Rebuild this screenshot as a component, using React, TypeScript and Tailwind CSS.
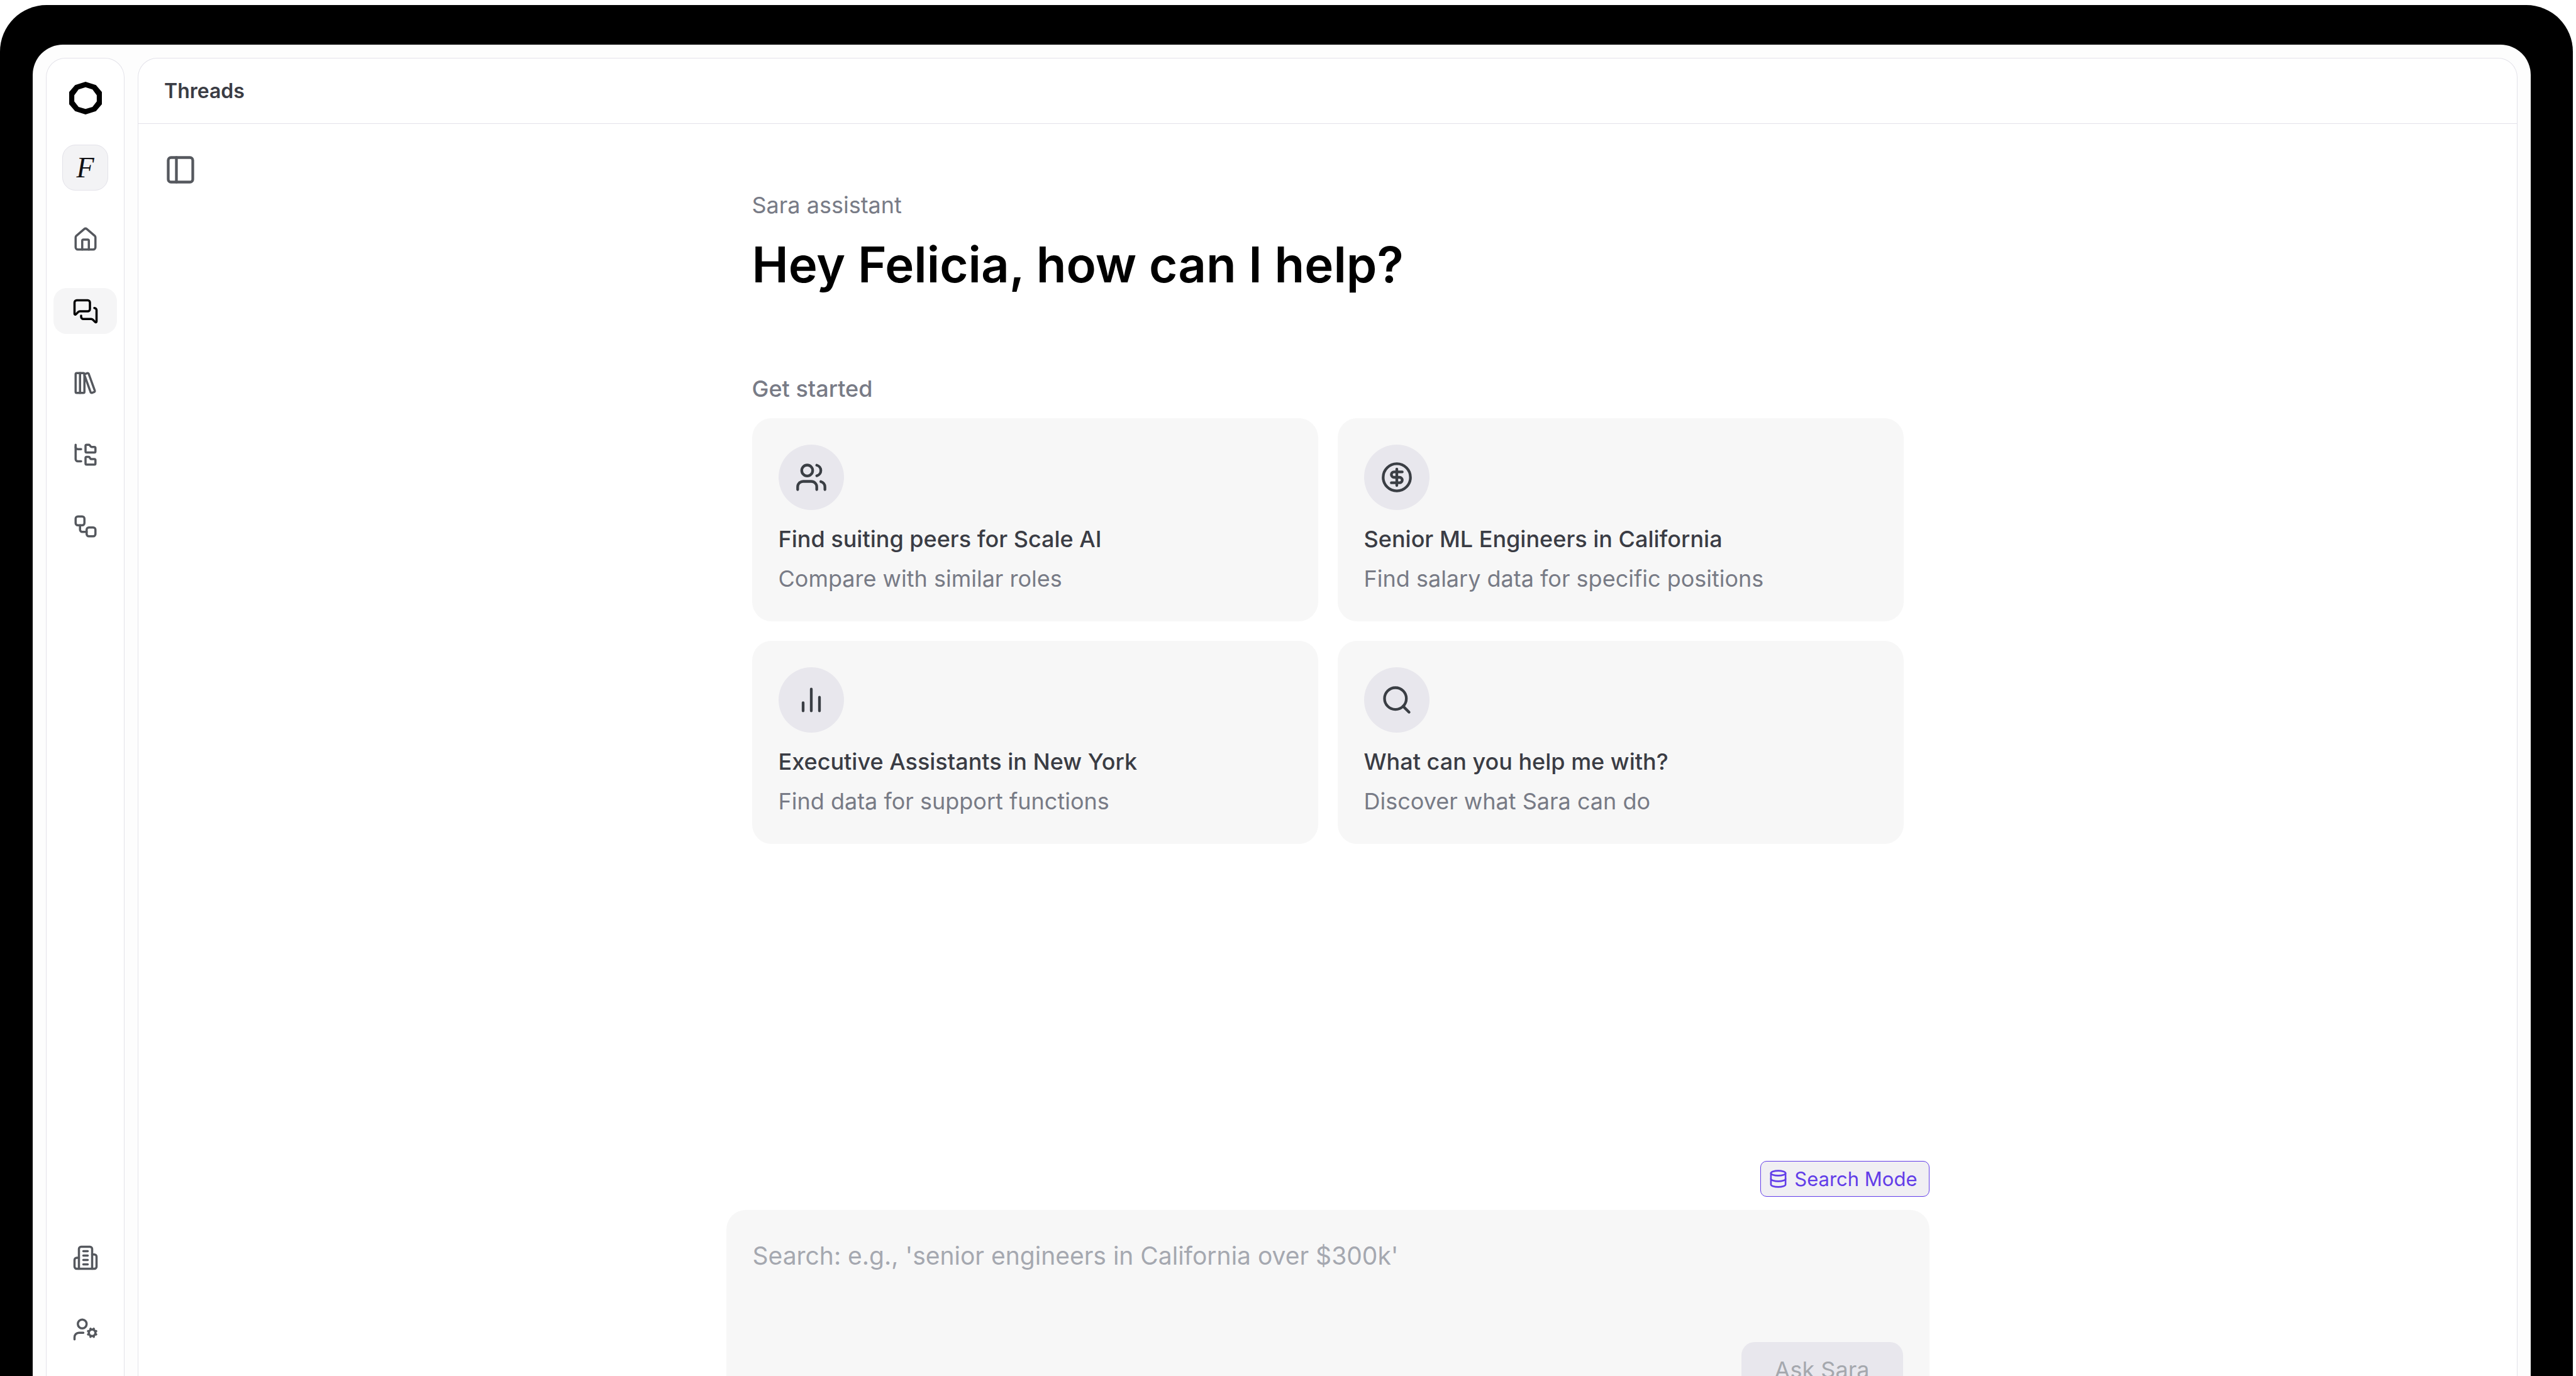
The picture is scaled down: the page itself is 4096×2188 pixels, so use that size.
import {
  CircleDollarSign,
  Database,
  FolderTree,
  House,
  LibraryBig,
  MessagesSquare,
  PanelLeft,
  Search,
  UserCog,
  Users,
  Workflow,
} from "lucide-react";
import type { ComponentType } from "react";

type IconType = ComponentType<{ className?: string }>;

function Logo({ className }: { className?: string }) {
  return (
    <svg viewBox="0 0 80 80" className={className} fill="currentColor" fillRule="evenodd" aria-hidden="true">
      <path d="M40 0 65.500 8 80 25V55L65.500 72 40 80 14.500 72 0 55V25L14.500 8ZM40 13.500 23 19 12.500 33V48L23 61.500 40 66.500 57 61.500 67.500 48V33L57 19Z" />
    </svg>
  );
}

function Building({ className }: { className?: string }) {
  return (
    <svg viewBox="0 0 24 24" className={className} fill="none" stroke="currentColor" strokeWidth="2" strokeLinecap="round" strokeLinejoin="round" aria-hidden="true">
      <path d="M6 22V4a2 2 0 0 1 2-2h8a2 2 0 0 1 2 2v18Z" />
      <path d="M6 12H4a2 2 0 0 0-2 2v6a2 2 0 0 0 2 2h2" />
      <path d="M18 9h2a2 2 0 0 1 2 2v9a2 2 0 0 1-2 2h-2" />
      <path d="M10 6h4M10 10h4M10 14h4M10 18h4" />
    </svg>
  );
}

function Bars({ className }: { className?: string }) {
  return (
    <svg viewBox="0 0 24 24" className={className} fill="none" stroke="currentColor" strokeWidth="2" strokeLinecap="round" aria-hidden="true">
      <path d="M6 20v-6M12 20V4M18 20V10" />
    </svg>
  );
}

const mainNav: { label: string; icon: IconType; active?: boolean }[] = [
  { label: "Home", icon: House },
  { label: "Threads", icon: MessagesSquare, active: true },
  { label: "Library", icon: LibraryBig },
  { label: "Job architecture", icon: FolderTree },
  { label: "Workflows", icon: Workflow },
];

const footerNav: { label: string; icon: IconType; active?: boolean }[] = [
  { label: "Company", icon: Building },
  { label: "Account settings", icon: UserCog },
];

const suggestions: { title: string; text: string; icon: IconType }[] = [
  { title: "Find suiting peers for Scale AI", text: "Compare with similar roles", icon: Users },
  { title: "Senior ML Engineers in California", text: "Find salary data for specific positions", icon: CircleDollarSign },
  { title: "Executive Assistants in New York", text: "Find data for support functions", icon: Bars },
  { title: "What can you help me with?", text: "Discover what Sara can do", icon: Search },
];

function NavItem({ label, icon: Icon, active }: { label: string; icon: IconType; active?: boolean }) {
  return (
    <a
      href="#"
      aria-label={label}
      aria-current={active ? "page" : undefined}
      className={
        active
          ? "flex h-[73px] items-center justify-center rounded-[21px] bg-[#f5f5f6] text-black"
          : "flex h-[73px] items-center justify-center rounded-[21px] text-[#55585e]"
      }
    >
      <Icon className="size-[42px]" />
    </a>
  );
}

function Sidebar() {
  return (
    <aside className="flex w-[125px] shrink-0 flex-col rounded-t-[31px] border border-b-0 border-[#e3e2e9] bg-white px-[11px] pt-[37px] pb-[38px]">
      <a href="#" aria-label="Main page" className="flex justify-center text-black">
        <Logo className="size-[52px]" />
      </a>
      <button
        type="button"
        className="mt-[48px] mb-[41px] flex size-[73px] items-center justify-center self-center rounded-[21px] border border-[#e3e2e9] bg-[#f3f3f5] font-['Liberation_Serif',serif] text-[46px] leading-none text-[#111114] italic"
      >
        F
      </button>
      <nav aria-label="Main" className="flex flex-col gap-[41px]">
        {mainNav.map((item) => (
          <NavItem key={item.label} {...item} />
        ))}
      </nav>
      <nav aria-label="Settings" className="mt-auto flex flex-col gap-[41px]">
        {footerNav.map((item) => (
          <NavItem key={item.label} {...item} />
        ))}
      </nav>
    </aside>
  );
}

function SuggestionCard({ title, text, icon: Icon }: { title: string; text: string; icon: IconType }) {
  return (
    <button type="button" className="rounded-[31px] bg-[#f7f7f7] p-[42px] text-left text-[36px] leading-[52px]">
      <span className="mb-[20px] flex size-[104px] items-center justify-center rounded-full bg-[#e8e7ed] text-[#3a3e44]">
        <Icon className="size-[52px]" />
      </span>
      <span className="mb-[11px] block font-medium text-[#3a3c44]">{title}</span>
      <span className="block text-[#787b86]">{text}</span>
    </button>
  );
}

function Composer() {
  return (
    <form className="mt-auto flex shrink-0 flex-col">
      <button
        type="button"
        className="mb-[21px] flex h-[57px] items-center gap-[10px] self-end rounded-[10px] border border-[#623de8] bg-[#f0eff3] pr-[18px] pl-[12px] text-[31px] leading-[42px] text-[#623de8]"
      >
        <Database className="size-[31px]" />
        Search Mode
      </button>
      <div className="flex flex-col rounded-t-[31px] bg-[#f7f7f7] px-[42px] pt-[42px]">
        <textarea
          aria-label="Message"
          placeholder="Search: e.g., 'senior engineers in California over $300k'"
          className="h-[125px] resize-none bg-transparent text-[39px] leading-[62px] outline-none placeholder:text-[#a5a8b0]"
        />
        <div className="mt-[43px] flex h-[54px] justify-end overflow-hidden">
          <button
            type="submit"
            className="h-[88px] w-[257px] rounded-[21px] bg-[#e8e7ed] text-[36px] leading-[52px] text-[#a5a8ae]"
          >
            Ask Sara
          </button>
        </div>
      </div>
    </form>
  );
}

export default function App() {
  return (
    <div className="flex h-screen flex-col overflow-hidden bg-white pt-[8px] pr-[5px] font-['Inter',sans-serif]">
      <div className="flex min-h-0 flex-1 flex-col rounded-t-[74px] bg-black pt-[63px] pr-[67px] pl-[52px]">
        <div className="flex min-h-0 flex-1 gap-[21px] rounded-t-[48px] bg-[#fdfdfd] px-[21px] pt-[21px]">
          <Sidebar />
          <main className="flex min-w-0 flex-1 flex-col rounded-t-[31px] border border-b-0 border-[#e3e2e9] bg-white">
            <header className="flex h-[104px] shrink-0 items-center border-b border-[#e3e2e9] px-[41px]">
              <h1 className="text-[32px] leading-[42px] font-semibold text-[#3a3c44]">Threads</h1>
            </header>
            <div className="grid min-h-0 flex-1 grid-cols-[1fr_1913px_1fr]">
              <button
                type="button"
                aria-label="Toggle thread list"
                className="mt-[47px] ml-[41px] self-start justify-self-start text-[#55585e]"
              >
                <PanelLeft className="size-[52px]" />
              </button>
              <div className="flex min-h-0 flex-col">
                <div className="flex flex-col px-[41px] pt-[103px]">
                  <p className="mb-[22px] text-[36px] leading-[52px] text-[#787b86]">Sara assistant</p>
                  <h2 className="mb-[124px] text-[78px] leading-[94px] font-semibold text-black">
                    Hey Felicia, how can I help?
                  </h2>
                  <h3 className="mb-[21px] text-[36px] leading-[52px] font-medium text-[#787b86]">Get started</h3>
                  <div className="grid grid-cols-2 gap-[31px]">
                    {suggestions.map((item) => (
                      <SuggestionCard key={item.title} {...item} />
                    ))}
                  </div>
                </div>
                <Composer />
              </div>
            </div>
          </main>
        </div>
      </div>
    </div>
  );
}
